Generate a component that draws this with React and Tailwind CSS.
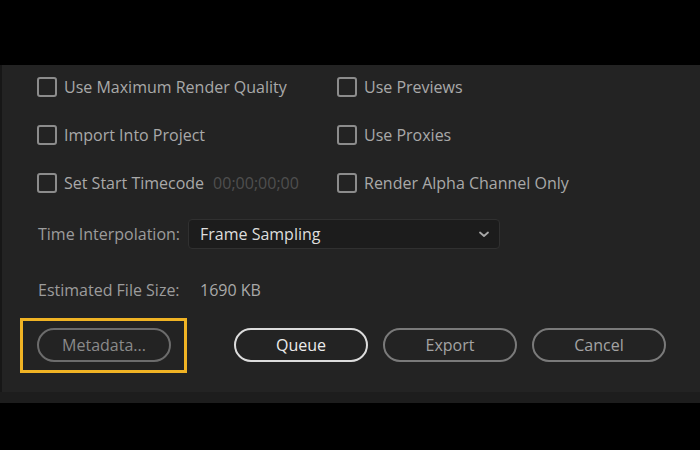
import React from "react";

const font = { fontFamily: '"Open Sans", "Liberation Sans", sans-serif' };

function Check({ label, extra }) {
  return (
    <div className="flex h-[24px] items-center">
      <span className="h-[20px] w-[20px] shrink-0 rounded-[3px] border-2 border-[#8c8c8c]" />
      <span className="ml-[7px] whitespace-nowrap text-[16px] text-[#a9a9a9]">{label}</span>
      {extra && (
        <span className="ml-[9px] whitespace-nowrap text-[16px] text-[#4f4f4f]">{extra}</span>
      )}
    </div>
  );
}

function Pill({ children, primary, dim }) {
  const tone = primary
    ? "border-[#dcdcdc] text-[#ececec]"
    : dim
    ? "border-[#6c6c6c] text-[#8a8a8a]"
    : "border-[#7a7a7a] text-[#a3a3a3]";
  return (
    <button
      className={`flex h-[34px] w-[134px] items-center justify-center rounded-full border-2 bg-transparent text-[16px] ${tone}`}
    >
      {children}
    </button>
  );
}

export default function App() {
  return (
    <div className="flex h-[450px] w-[700px] flex-col bg-black" style={font}>
      <div className="h-[65px]" />
      <div className="flex h-[327px] flex-col border-l-2 border-[#171717] bg-[#232323] pl-[35px] pt-[10px]">
        <div className="grid grid-cols-[300px_1fr] gap-y-[24px]">
          <Check label="Use Maximum Render Quality" />
          <Check label="Use Previews" />
          <Check label="Import Into Project" />
          <Check label="Use Proxies" />
          <Check label="Set Start Timecode" extra="00;00;00;00" />
          <Check label="Render Alpha Channel Only" />
        </div>

        <div className="mt-[24px] flex h-[30px] items-center">
          <span className="w-[151px] pl-[1px] text-[16px] text-[#9c9c9c]">Time Interpolation:</span>
          <div className="flex h-[30px] w-[312px] items-center justify-between rounded-[4px] border border-[#303030] bg-[#1c1c1c] pl-[11px] pr-[8px]">
            <span className="text-[16px] text-[#dedede]">Frame Sampling</span>
            <svg width="14" height="14" viewBox="0 0 14 14" fill="none">
              <path d="M3 5.5 L7 9 L11 5.5" stroke="#a8a8a8" strokeWidth="1.8" strokeLinecap="round" strokeLinejoin="round" />
            </svg>
          </div>
        </div>

        <div className="mt-[29px] flex h-[24px] items-center">
          <span className="w-[163px] pl-[1px] text-[16px] text-[#9c9c9c]">Estimated File Size:</span>
          <span className="text-[16px] text-[#a9a9a9]">1690 KB</span>
        </div>

        <div className="mt-[26px] flex items-center">
          <div className="relative">
            <Pill dim>Metadata...</Pill>
            <div className="pointer-events-none absolute left-[-17px] top-[-10px] h-[55px] w-[167px] border-[3px] border-[#f0b324]" />
          </div>
          <div className="ml-[63px] flex gap-[15px]">
            <Pill primary>Queue</Pill>
            <Pill>Export</Pill>
            <Pill>Cancel</Pill>
          </div>
        </div>
      </div>
      <div className="h-[11px] bg-[#1d1d1d]" />
    </div>
  );
}
